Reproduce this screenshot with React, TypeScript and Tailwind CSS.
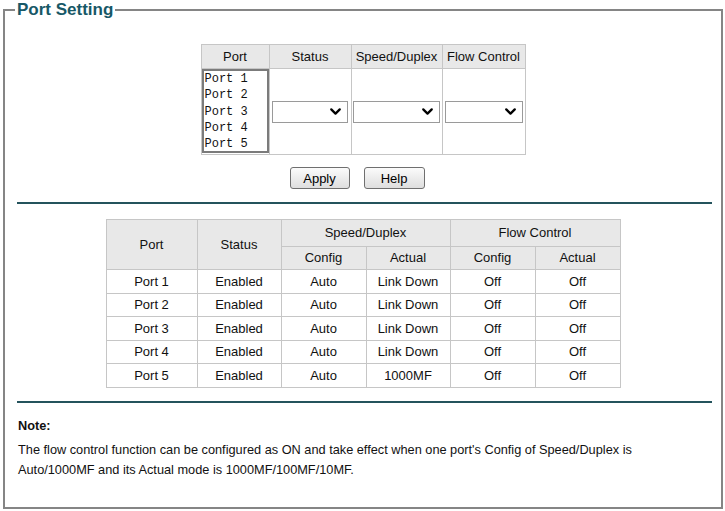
import { ChevronDown } from "lucide-react";

const PORTS = ["Port 1", "Port 2", "Port 3", "Port 4", "Port 5"];

const STATUS_ROWS = [
  { port: "Port 1", status: "Enabled", speedCfg: "Auto", speedAct: "Link Down", flowCfg: "Off", flowAct: "Off" },
  { port: "Port 2", status: "Enabled", speedCfg: "Auto", speedAct: "Link Down", flowCfg: "Off", flowAct: "Off" },
  { port: "Port 3", status: "Enabled", speedCfg: "Auto", speedAct: "Link Down", flowCfg: "Off", flowAct: "Off" },
  { port: "Port 4", status: "Enabled", speedCfg: "Auto", speedAct: "Link Down", flowCfg: "Off", flowAct: "Off" },
  { port: "Port 5", status: "Enabled", speedCfg: "Auto", speedAct: "1000MF", flowCfg: "Off", flowAct: "Off" },
];

// plain dropdown box with a heavy chevron on the right
const DropBox = ({ width }: { width: string }) => (
  <div className={`${width} h-[22px] mx-auto border border-[#9a9a9a] bg-white flex items-center justify-end pr-[3px]`}>
    <ChevronDown className="w-[17px] h-[17px] text-black" strokeWidth={3.2} />
  </div>
);

const PushButton = ({ label, width }: { label: string; width: string }) => (
  <button className={`${width} h-[22px] rounded-[3px] border border-[#6f6f6f] bg-gradient-to-b from-[#fbfbfb] to-[#dedede] text-[13px] text-black leading-none`}>
    {label}
  </button>
);

const Divider = () => <div className="h-[2px] bg-[#24535c] ml-[12px] mr-[9px]" />;

const th = "border border-[#c6c6c6] bg-[#e8e8e8] font-normal";
const td = "border border-[#c6c6c6] text-center";

export default function App() {
  return (
    <div className="w-[725px] h-[511px] bg-white text-[#111] font-['Liberation_Sans',Arial,sans-serif]">
      <fieldset className="ml-[3px] w-[720px] h-[509px] border-2 border-[#858585]">
        <legend className="ml-[10px] px-[2px] text-[17px] leading-[20px] font-bold text-[#175867]">Port Setting</legend>

        {/* config form */}
        <table className="mx-auto mt-[24px] border-collapse text-[13px]">
          <thead>
            <tr className="h-[24px]">
              <th className={`${th} w-[68px]`}>Port</th>
              <th className={`${th} w-[82px]`}>Status</th>
              <th className={`${th} w-[91px]`}>Speed/Duplex</th>
              <th className={`${th} w-[83px]`}>Flow Control</th>
            </tr>
          </thead>
          <tbody>
            <tr className="h-[86px]">
              <td className="border border-[#c6c6c6] p-0 align-top">
                <div className="h-[84px] border-2 border-[#7b7b7b] pl-[1px] font-['Liberation_Mono','Courier_New',monospace] text-[12px] leading-[16.3px]">
                  {PORTS.map((p) => (
                    <div key={p}>{p}</div>
                  ))}
                </div>
              </td>
              <td className={td}>
                <DropBox width="w-[76px]" />
              </td>
              <td className={td}>
                <DropBox width="w-[87px]" />
              </td>
              <td className={td}>
                <DropBox width="w-[78px]" />
              </td>
            </tr>
          </tbody>
        </table>

        <div className="flex justify-center gap-[14px] mt-[12px] pr-[12px]">
          <PushButton label="Apply" width="w-[60px]" />
          <PushButton label="Help" width="w-[61px]" />
        </div>

        <div className="mt-[13px]">
          <Divider />
        </div>

        {/* port status */}
        <table className="mx-auto mt-[15px] border-collapse text-[13px]">
          <thead>
            <tr className="h-[27px]">
              <th rowSpan={2} className={`${th} w-[91px]`}>Port</th>
              <th rowSpan={2} className={`${th} w-[84px]`}>Status</th>
              <th colSpan={2} className={th}>Speed/Duplex</th>
              <th colSpan={2} className={th}>Flow Control</th>
            </tr>
            <tr className="h-[23px]">
              <th className={`${th} w-[85px]`}>Config</th>
              <th className={`${th} w-[84px]`}>Actual</th>
              <th className={`${th} w-[85px]`}>Config</th>
              <th className={`${th} w-[85px]`}>Actual</th>
            </tr>
          </thead>
          <tbody>
            {STATUS_ROWS.map((r) => (
              <tr key={r.port} className="h-[23.6px]">
                <td className={td}>{r.port}</td>
                <td className={td}>{r.status}</td>
                <td className={td}>{r.speedCfg}</td>
                <td className={td}>{r.speedAct}</td>
                <td className={td}>{r.flowCfg}</td>
                <td className={td}>{r.flowAct}</td>
              </tr>
            ))}
          </tbody>
        </table>

        <div className="mt-[13px]">
          <Divider />
        </div>

        <div className="ml-[13px] mt-[13px] text-[12.75px] leading-[20px]">
          <div className="font-bold">Note:</div>
          <p className="mt-[4px]">
            The flow control function can be configured as ON and take effect when one port's Config of Speed/Duplex is
            <br />
            Auto/1000MF and its Actual mode is 1000MF/100MF/10MF.
          </p>
        </div>
      </fieldset>
    </div>
  );
}
